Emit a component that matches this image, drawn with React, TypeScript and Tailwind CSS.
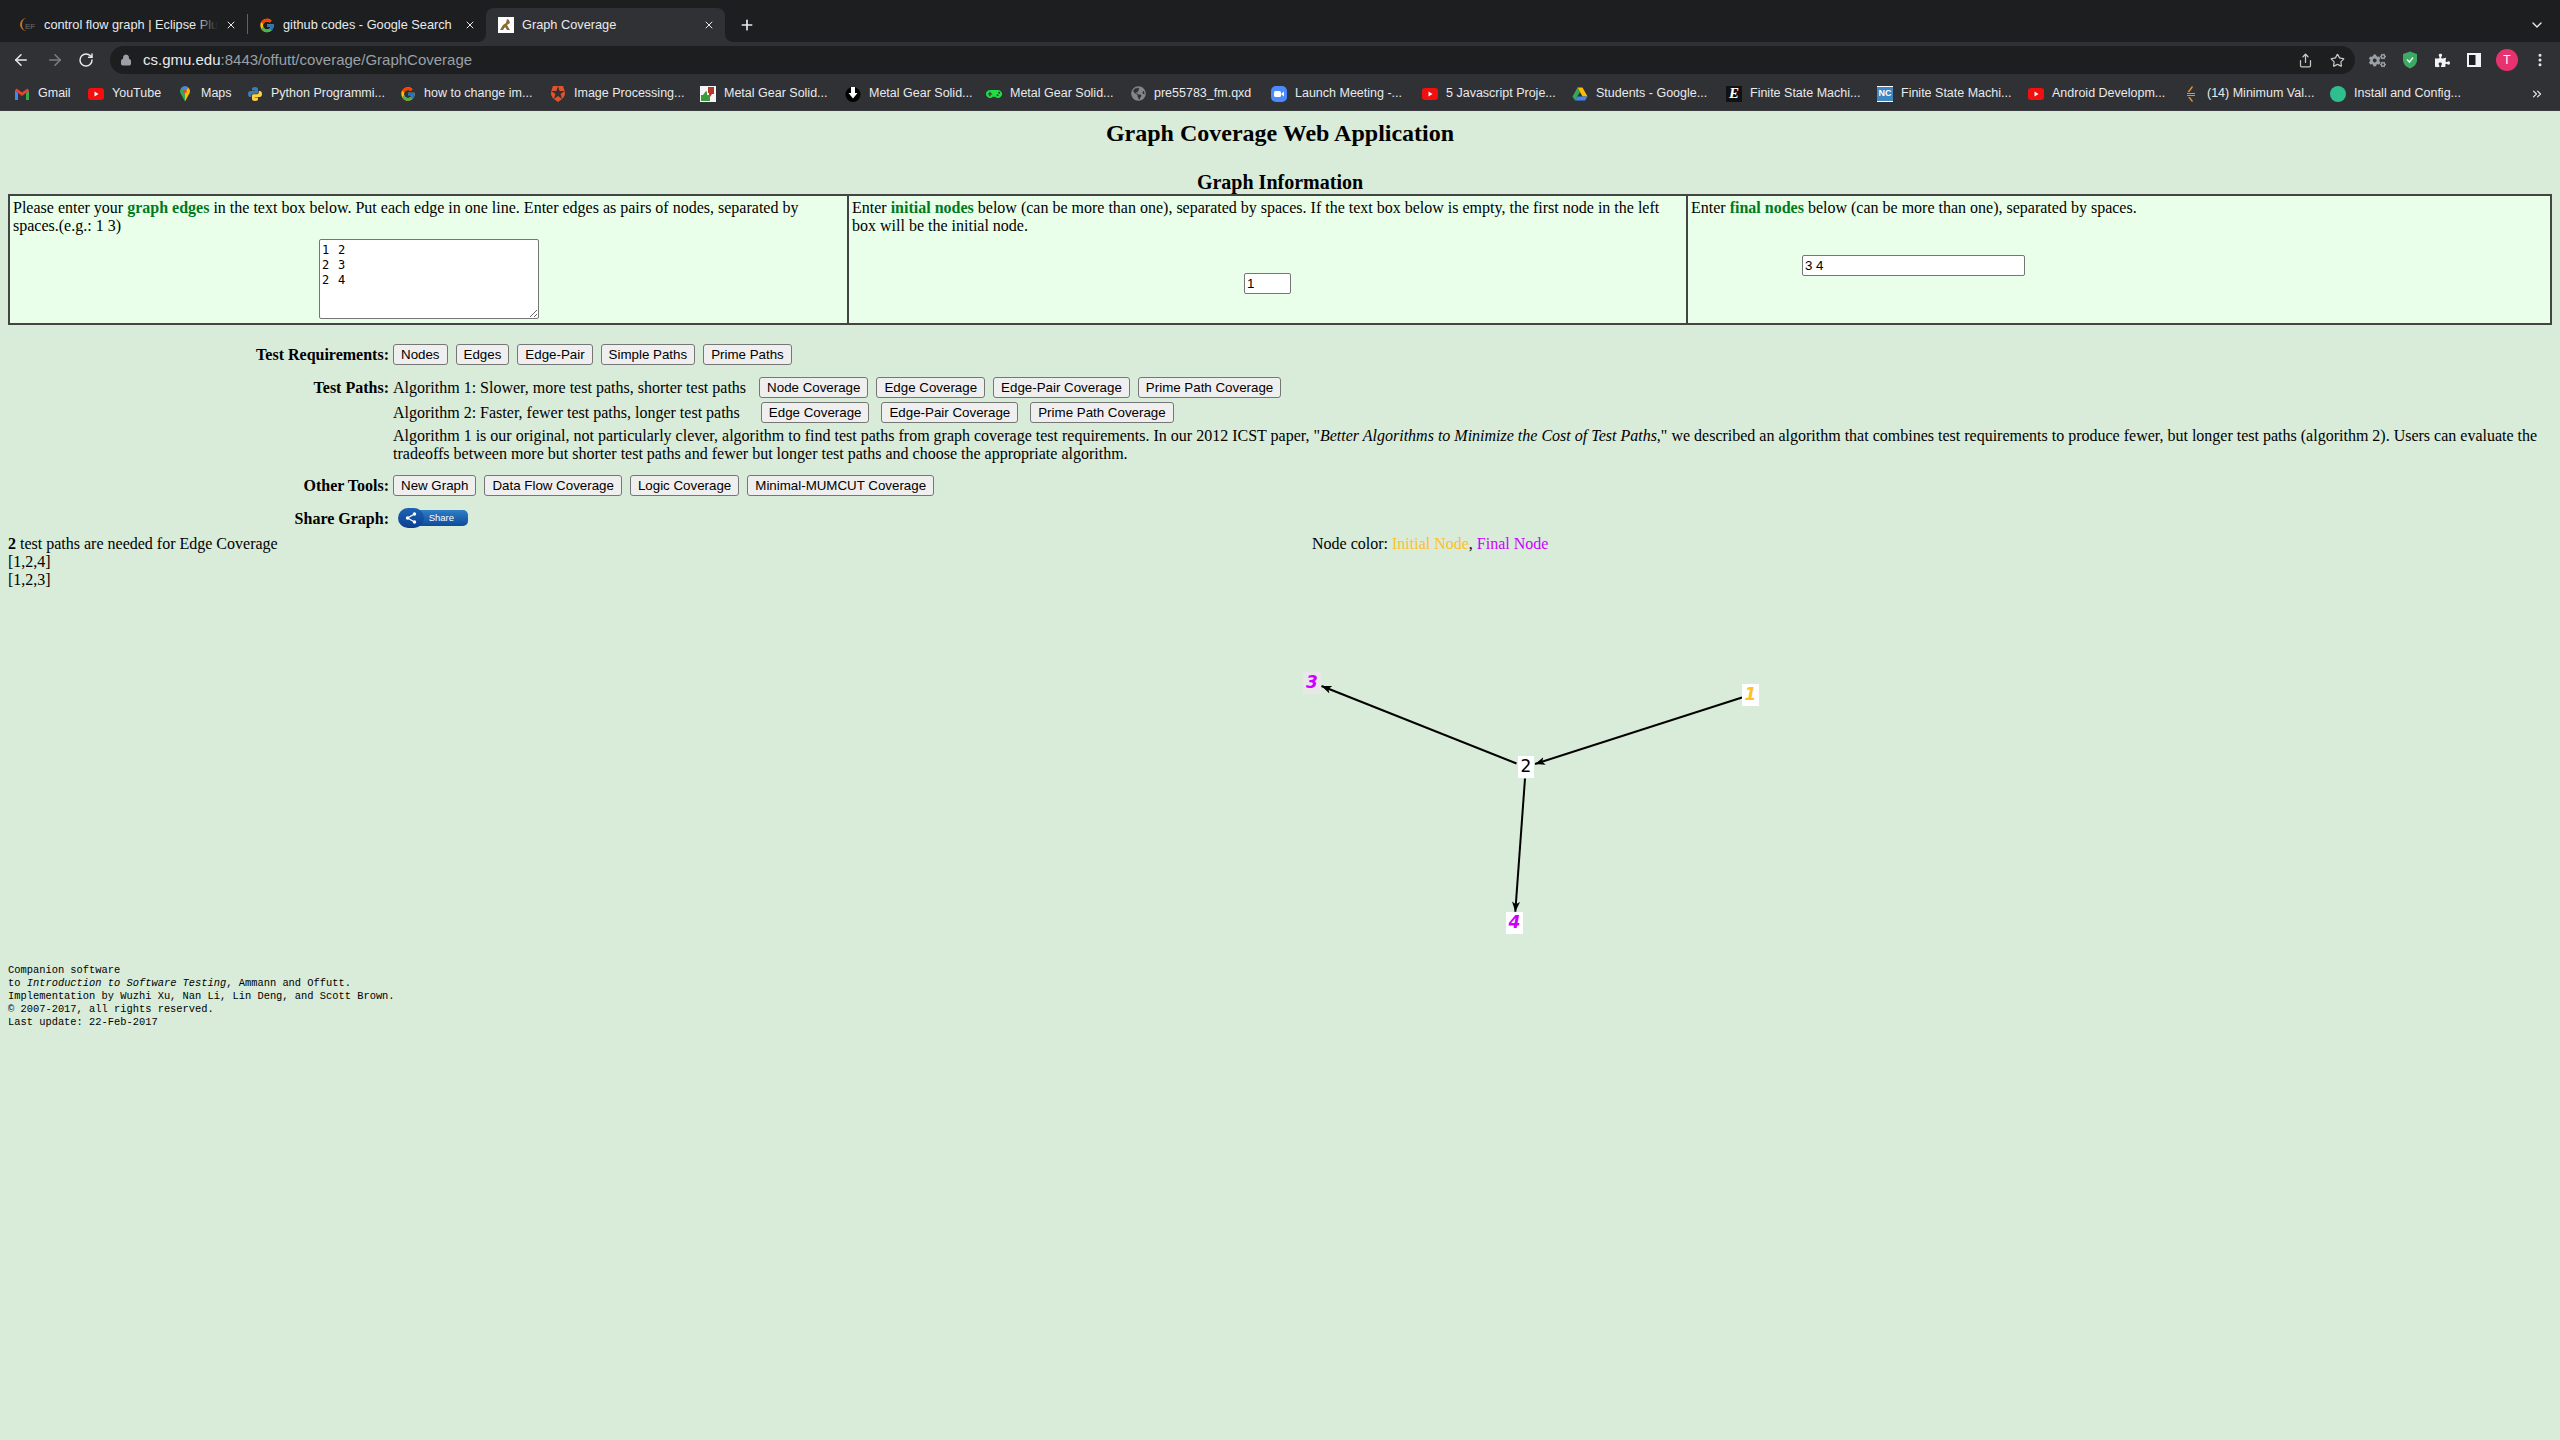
import React from "react";
import { ArrowLeft, ArrowRight, ChevronDown, ChevronsRight, EllipsisVertical, Lock, Plus, RotateCw, Share, Star, X } from "lucide-react";
import { FcGoogle } from "react-icons/fc";
import { FaCogs, FaGamepad, FaGlobeAmericas, FaPuzzlePiece } from "react-icons/fa";
import { SiAuth0 } from "react-icons/si";

const YouTubeIcon = () => (
  <svg width="16" height="16" viewBox="0 0 16 16">
    <rect x="0" y="2" width="16" height="12" rx="3" fill="#f40f0f" />
    <path d="M6.500 5.500l4 2.500-4 2.500z" fill="#fff" />
  </svg>
);

const GmailIcon = () => (
  <svg width="16" height="16" viewBox="0 0 16 16">
    <path d="M1 4v10h3V7z" fill="#4285f4" />
    <path d="M15 4v10h-3V7z" fill="#34a853" />
    <path d="M1 4.500L2.500 2.500 8 6.500l5.500-4L15 4.500 8 10z" fill="#ea4335" />
  </svg>
);

const MapsIcon = () => (
  <svg width="16" height="16" viewBox="0 0 16 16">
    <path d="M8 0.500C5 0.500 3 2.700 3 5.300c0 1.200.5 2.200 1.200 3.200L8 15.500z" fill="#34a853" />
    <path d="M8 0.500c3 0 5 2.200 5 4.800 0 1.200-.5 2.200-1.200 3.200L8 15.500z" fill="#fbbc04" />
    <path d="M4.500 1.800A5 5 0 0 1 11.500 1.800L8 5.300z" fill="#4285f4" />
    <circle cx="8" cy="5.300" r="1.800" fill="#ea4335" />
  </svg>
);

const PythonIcon = () => {
  const d = "M8 1C5.500 1 5 2 5 3v1.500h3.200V5H3.200C2 5 1 6 1 8s1 3 2 3h1.300V9.500C4.300 8.500 5 7.800 6 7.800h3.500c.9 0 1.500-.7 1.500-1.500V3c0-1-1-2-3-2z";
  return (
    <svg width="16" height="16" viewBox="0 0 16 16">
      <path d={d} fill="#3f7cb0" />
      <path d={d} fill="#fdd23e" transform="rotate(180 8 8)" />
    </svg>
  );
};

const ThumbsIcon = () => (
  <svg width="16" height="16" viewBox="0 0 16 16">
    <rect width="16" height="16" fill="#f4f4f4" />
    <path d="M8 1h6v7h-2l-2 3-1-1V7H8z" fill="#b8342f" />
    <path d="M1 9h2l3-4 1 1v3h3v6H1z" fill="#3c9a3c" />
  </svg>
);

const DownloadIcon = () => (
  <svg width="16" height="16" viewBox="0 0 16 16">
    <circle cx="8" cy="8.500" r="7.500" fill="#000" />
    <path d="M6 1h4v6h2.500L8 12.500 3.500 7H6z" fill="#fff" />
  </svg>
);

const ZoomIcon = () => (
  <svg width="16" height="16" viewBox="0 0 16 16">
    <rect width="16" height="16" rx="5" fill="#4a8cff" />
    <rect x="3" y="5" width="7" height="6" rx="1.500" fill="#fff" />
    <path d="M10.500 7.500L13 5.500v5l-2.500-2z" fill="#fff" />
  </svg>
);

const DriveIcon = () => (
  <svg width="16" height="16" viewBox="0 0 16 16">
    <path d="M5.500 1.500h5l5 9h-5z" fill="#fbbc04" />
    <path d="M5.500 1.500L0.500 10.500 3 14.500 8 6z" fill="#34a853" />
    <path d="M5.500 10.500h10L13 14.500H3z" fill="#4285f4" />
  </svg>
);

const EIcon = () => (
  <span className="flex h-[16px] w-[16px] items-center justify-center bg-[#111] font-['Liberation_Serif',serif] text-[15px] font-bold italic leading-none text-white">
    E
  </span>
);

const UncIcon = () => (
  <span className="flex h-[16px] w-[16px] items-center justify-center bg-white">
    <span className="flex h-[14px] w-[16px] items-center justify-center bg-[#3e87c4] font-['Liberation_Sans',sans-serif] text-[9px] font-bold leading-none text-white">
      NC
    </span>
  </span>
);

const ValIcon = () => (
  <svg width="16" height="16" viewBox="0 0 16 16">
    <path d="M9 0L4.500 6h2L10 1z" fill="#e8912b" />
    <path d="M4 7h8v1H4zM4 9h8v1H4z" fill="#a0a0a0" />
    <path d="M5 11l4 5 1-1-3-4z" fill="#e8912b" />
  </svg>
);

const bookmarks: { icon: React.ReactNode; label: string; w: string }[] = [
  { icon: <GmailIcon />, label: "Gmail", w: "w-[74px]" },
  { icon: <YouTubeIcon />, label: "YouTube", w: "w-[89px]" },
  { icon: <MapsIcon />, label: "Maps", w: "w-[70px]" },
  { icon: <PythonIcon />, label: "Python Programmi...", w: "w-[153px]" },
  { icon: <FcGoogle size={16} />, label: "how to change im...", w: "w-[150px]" },
  { icon: <SiAuth0 size={16} color="#e0532c" />, label: "Image Processing...", w: "w-[150px]" },
  { icon: <ThumbsIcon />, label: "Metal Gear Solid...", w: "w-[145px]" },
  { icon: <DownloadIcon />, label: "Metal Gear Solid...", w: "w-[141px]" },
  { icon: <FaGamepad size={16} color="#22dd44" />, label: "Metal Gear Solid...", w: "w-[144px]" },
  { icon: <FaGlobeAmericas size={15} color="#80868b" />, label: "pre55783_fm.qxd", w: "w-[141px]" },
  { icon: <ZoomIcon />, label: "Launch Meeting -...", w: "w-[151px]" },
  { icon: <YouTubeIcon />, label: "5 Javascript Proje...", w: "w-[150px]" },
  { icon: <DriveIcon />, label: "Students - Google...", w: "w-[154px]" },
  { icon: <EIcon />, label: "Finite State Machi...", w: "w-[151px]" },
  { icon: <UncIcon />, label: "Finite State Machi...", w: "w-[151px]" },
  { icon: <YouTubeIcon />, label: "Android Developm...", w: "w-[155px]" },
  { icon: <ValIcon />, label: "(14) Minimum Val...", w: "w-[147px]" },
  { icon: <span className="block h-[16px] w-[16px] rounded-full bg-[#2fbf8f]" />, label: "Install and Config...", w: "w-[140px]" },
];

const Tab = ({ icon, title, active, fade }: { icon: React.ReactNode; title: string; active?: boolean; fade?: boolean }) => (
  <div className={`relative flex h-[34px] w-[239px] shrink-0 items-center pl-[12px] pr-[10px] ${active ? "rounded-t-[8px] bg-[#303134]" : ""}`}>
    {active && <span className="absolute bottom-0 left-[-8px] h-[8px] w-[8px] bg-[radial-gradient(circle_at_0_0,#1d1e20_7.5px,#303134_8.5px)]" />}
    {active && <span className="absolute bottom-0 right-[-8px] h-[8px] w-[8px] bg-[radial-gradient(circle_at_100%_0,#1d1e20_7.5px,#303134_8.5px)]" />}
    <span className="flex h-[16px] w-[16px] shrink-0 items-center justify-center">{icon}</span>
    <div className="relative ml-[8px] w-[174px] overflow-hidden whitespace-nowrap text-[12.75px] text-[#e8eaed]">
      {title}
      {fade && <span className="absolute right-0 top-0 h-full w-[24px] bg-linear-to-r from-transparent to-[#1d1e20]" />}
    </div>
    <X size={12} strokeWidth={2} className="ml-auto text-[#e8eaed]" />
  </div>
);

const Btn = ({ children, className = "" }: { children: React.ReactNode; className?: string }) => (
  <button
    type="button"
    className={`h-[21px] rounded-[3px] border border-[#767676] bg-[#efefef] px-[7px] font-['Liberation_Sans',sans-serif] text-[13.33px] leading-none text-black ${className}`}
  >
    {children}
  </button>
);

const Label = ({ children, className = "" }: { children: React.ReactNode; className?: string }) => (
  <div className={`text-right font-bold ${className}`}>{children}</div>
);

const nodeBase = "absolute flex h-[22px] items-center justify-center pb-[2px] font-['DejaVu_Sans',sans-serif] text-[17px] leading-none";

export default function App() {
  return (
    <div className="flex min-h-screen flex-col bg-[#d9ebd9]">
      {/* browser chrome */}
      <div className="flex h-[42px] items-end bg-[#1d1e20] pl-[8px] font-['Liberation_Sans',sans-serif]">
        <Tab
          fade
          title="control flow graph | Eclipse Plugins"
          icon={
            <span className="relative block h-[16px] w-[16px]">
              <span className="absolute left-0 top-[1px] h-[13px] w-[10px] rounded-l-full border-l-2 border-[#c9722b]" />
              <span className="absolute left-[5px] top-[6px] font-['Liberation_Sans',sans-serif] text-[8px] font-bold leading-none text-[#555]">EF</span>
            </span>
          }
        />
        <div className="relative">
          <span className="absolute left-0 top-[6px] h-[20px] w-px bg-[#5f6368]" />
          <Tab title="github codes - Google Search" icon={<FcGoogle size={17} />} />
        </div>
        <Tab
          active
          title="Graph Coverage"
          icon={
            <svg width="16" height="16" viewBox="0 0 16 16">
              <rect width="16" height="16" fill="#fff" />
              <path d="M2 13l3-5 3-2 1-4 2 1 1 3-3 2 3 5h-3l-2-3-2 3z" fill="#8a6a34" />
            </svg>
          }
        />
        <Plus size={16} strokeWidth={2.5} className="mb-[9px] ml-[14px] text-[#e8eaed]" />
        <ChevronDown size={16} className="mb-[9px] ml-auto mr-[15px] text-[#e8eaed]" />
      </div>
      <div className="flex h-[32px] items-end bg-[#303134] font-['Liberation_Sans',sans-serif]">
        <div className="flex h-[28px] w-[110px] items-center text-[#e8eaed]">
          <ArrowLeft size={18} strokeWidth={2} className="ml-[12px]" />
          <ArrowRight size={18} strokeWidth={2} className="ml-[16px] text-[#7c7f84]" />
          <RotateCw size={16} strokeWidth={2.2} className="ml-[14px]" />
        </div>
        <div className="flex h-[28px] w-[2245px] items-center rounded-full bg-[#1d1e20] pl-[10px] pr-[9px]">
          <Lock size={12} fill="#9aa0a6" className="text-[#9aa0a6]" />
          <span className="ml-[11px] text-[15px] text-[#e8eaed]">
            cs.gmu.edu<span className="text-[#9aa0a6]">:8443/offutt/coverage/GraphCoverage</span>
          </span>
          <Share size={15} className="ml-auto text-[#c4c7c5]" />
          <Star size={15} className="ml-[17px] mr-[1px] text-[#c4c7c5]" />
        </div>
        <div className="flex h-[28px] flex-1 items-center pl-[14px] text-[#e8eaed]">
          <FaCogs size={17} color="#9aa0a6" />
          <svg width="16" height="18" viewBox="0 0 16 18" className="ml-[16px]">
            <path d="M8 0.500L15 3v6c0 4-3 7-7 8.500C4 16 1 13 1 9V3z" fill="#3ea865" />
            <path d="M5 8.500l2.500 2.500L11 6.500" stroke="#dff5e6" strokeWidth="1.500" fill="none" />
          </svg>
          <FaPuzzlePiece size={15} color="#f1f3f4" className="ml-[17px]" />
          <svg width="14" height="14" viewBox="0 0 14 14" className="ml-[17px]">
            <rect x="0" y="0" width="14" height="14" fill="#f1f3f4" />
            <rect x="2" y="2" width="6.500" height="10" fill="#1d1e20" />
          </svg>
          <span className="ml-[15px] flex h-[22px] w-[22px] items-center justify-center rounded-full bg-[#e8326e] text-[12px] text-white">T</span>
          <EllipsisVertical size={16} strokeWidth={2.5} className="ml-[14px]" />
        </div>
      </div>
      <div className="flex h-[37px] items-center border-b border-[#3c3d40] bg-[#303134] pl-[14px] pt-[3px] font-['Liberation_Sans',sans-serif] text-[12.5px] text-[#e8eaed]">
        {bookmarks.map((b, i) => (
          <div key={i} className={`flex shrink-0 items-center gap-[8px] whitespace-nowrap ${b.w}`}>
            <span className="flex h-[16px] w-[16px] shrink-0 items-center justify-center">{b.icon}</span>
            {b.label}
          </div>
        ))}
        <ChevronsRight size={14} className="ml-auto mr-[16px]" />
      </div>

      {/* page */}
      <div className="flex-1 font-['Liberation_Serif',serif] text-[16px] leading-[18px] text-black">
        <h1 className="pt-[8px] text-center text-[24px] font-bold leading-[28px]">Graph Coverage Web Application</h1>
        <h3 className="mt-[24px] pb-[1px] text-center text-[20px] font-bold leading-[22px]">Graph Information</h3>

        <div className="mx-[8px] grid h-[131px] grid-cols-[839px_839px_1fr] border-2 border-[#444] bg-[#e9ffe9]">
          <div className="border-r-2 border-[#444] pl-[3px] pt-[3px]">
            <p>
              Please enter your <b className="text-[#007a1f]">graph edges</b> in the text box below. Put each edge in one line. Enter edges as pairs of nodes, separated by spaces.(e.g.: 1 3)
            </p>
            <textarea
              readOnly
              defaultValue={"1 2\n2 3\n2 4"}
              className="ml-[306px] mt-[4px] block h-[80px] w-[220px] rounded-[2px] border border-[#767676] bg-white px-[2px] pt-[3px] font-['DejaVu_Sans_Mono',monospace] text-[12px] leading-[15px] tracking-[0.78px]"
            />
          </div>
          <div className="border-r-2 border-[#444] pl-[3px] pt-[3px]">
            <p>
              Enter <b className="text-[#007a1f]">initial nodes</b> below (can be more than one), separated by spaces. If the text box below is empty, the first node in the left box will be the initial node.
            </p>
            <input
              readOnly
              defaultValue="1"
              className="ml-[392px] mt-[38px] block h-[21px] w-[47px] rounded-[2px] border border-[#767676] bg-white px-[2px] font-['Liberation_Sans',sans-serif] text-[13.33px]"
            />
          </div>
          <div className="pl-[3px] pt-[3px]">
            <p>
              Enter <b className="text-[#007a1f]">final nodes</b> below (can be more than one), separated by spaces.
            </p>
            <input
              readOnly
              defaultValue="3 4"
              className="ml-[111px] mt-[38px] block h-[21px] w-[223px] rounded-[2px] border border-[#767676] bg-white px-[2px] font-['Liberation_Sans',sans-serif] text-[13.33px]"
            />
          </div>
        </div>

        <div className="mt-[19px] grid grid-cols-[389px_1fr] gap-x-[4px] gap-y-[12px] pr-[8px]">
          <Label className="leading-[21px]">Test Requirements:</Label>
          <div className="flex gap-[8px]">
            <Btn>Nodes</Btn>
            <Btn>Edges</Btn>
            <Btn>Edge-Pair</Btn>
            <Btn>Simple Paths</Btn>
            <Btn>Prime Paths</Btn>
          </div>

          <Label className="leading-[21px]">Test Paths:</Label>
          <div>
            <div className="flex h-[21px] items-center">
              <span>Algorithm 1: Slower, more test paths, shorter test paths</span>
              <div className="ml-[13px] flex gap-[8px]">
                <Btn>Node Coverage</Btn>
                <Btn>Edge Coverage</Btn>
                <Btn>Edge-Pair Coverage</Btn>
                <Btn>Prime Path Coverage</Btn>
              </div>
            </div>
            <div className="mt-[4px] flex h-[21px] items-center">
              <span>Algorithm 2: Faster, fewer test paths, longer test paths</span>
              <div className="ml-[21px] flex gap-[12px]">
                <Btn>Edge Coverage</Btn>
                <Btn>Edge-Pair Coverage</Btn>
                <Btn>Prime Path Coverage</Btn>
              </div>
            </div>
            <p className="mt-[4px]">
              Algorithm 1 is our original, not particularly clever, algorithm to find test paths from graph coverage test requirements. In our 2012 ICST paper, "<i>Better Algorithms to Minimize the Cost of Test Paths</i>," we described an algorithm that combines test requirements to produce fewer, but longer test paths (algorithm 2). Users can evaluate the tradeoffs between more but shorter test paths and fewer but longer test paths and choose the appropriate algorithm.
            </p>
          </div>

          <Label className="leading-[21px]">Other Tools:</Label>
          <div className="flex gap-[8px]">
            <Btn>New Graph</Btn>
            <Btn>Data Flow Coverage</Btn>
            <Btn>Logic Coverage</Btn>
            <Btn>Minimal-MUMCUT Coverage</Btn>
          </div>

          <Label className="leading-[22px]">Share Graph:</Label>
          <div className="relative ml-[5px] h-[20px] w-[70px]">
            <div className="absolute right-0 top-[2px] flex h-[16px] w-[62px] items-center justify-end rounded-r-[5px] bg-linear-to-b from-[#2f7fc4] to-[#0f4a9c] pr-[14px] font-['Liberation_Sans',sans-serif] text-[9.500px] leading-none text-white">
              Share
            </div>
            <div className="absolute left-0 top-0 flex h-[20px] w-[26px] items-center justify-center rounded-full bg-linear-to-b from-[#1d63b5] to-[#0c3f8f]">
              <svg width="12" height="12" viewBox="0 0 12 12">
                <path d="M9.500 2L2.500 6l7 4" stroke="#fff" strokeWidth="1.300" fill="none" />
                <circle cx="9.500" cy="2" r="1.700" fill="#fff" />
                <circle cx="2.500" cy="6" r="1.700" fill="#fff" />
                <circle cx="9.500" cy="10" r="1.700" fill="#fff" />
              </svg>
            </div>
          </div>
        </div>

        <div className="mt-[5px] flex">
          <div className="w-[1312px] pl-[8px]">
            <div>
              <b>2</b> test paths are needed for Edge Coverage
            </div>
            <div>[1,2,4]</div>
            <div>[1,2,3]</div>
          </div>
          <div>
            Node color: <span className="text-[#ffc125]">Initial Node</span>, <span className="text-[#cc00ff]">Final Node</span>
          </div>
        </div>

        {/* graph canvas: page y 589 */}
        <div className="relative h-[375px]">
          <svg className="absolute left-0 top-0" width="2560" height="375" viewBox="0 0 2560 375">
            <defs>
              <marker id="arr" markerUnits="userSpaceOnUse" markerWidth="11" markerHeight="8" refX="10" refY="4" orient="auto">
                <path d="M0 0L10 4 0 8 2.500 4z" fill="#000" />
              </marker>
            </defs>
            <g stroke="#000" strokeWidth="2">
              <line x1="1742" y1="108.500" x2="1535" y2="175" markerEnd="url(#arr)" />
              <line x1="1516.500" y1="174.500" x2="1321.500" y2="97" markerEnd="url(#arr)" />
              <line x1="1525" y1="189.500" x2="1515.300" y2="322.700" markerEnd="url(#arr)" />
            </g>
          </svg>
          <div className={`${nodeBase} left-[1303px] top-[83px] w-[18px] bg-[#e8e8e8] font-bold italic text-[#cc00ff]`}>3</div>
          <div className={`${nodeBase} left-[1742px] top-[95px] w-[17px] bg-white font-bold italic text-[#ffc125]`}>1</div>
          <div className={`${nodeBase} left-[1518px] top-[167px] w-[16px] bg-white text-black`}>2</div>
          <div className={`${nodeBase} left-[1506px] top-[323px] w-[17px] bg-white font-bold italic text-[#cc00ff]`}>4</div>
        </div>

        <div className="pl-[8px] font-['Liberation_Mono',monospace] text-[10.400px] leading-[13px]">
          <div>Companion software</div>
          <div>
            to <i>Introduction to Software Testing</i>, Ammann and Offutt.
          </div>
          <div>Implementation by Wuzhi Xu, Nan Li, Lin Deng, and Scott Brown.</div>
          <div>© 2007-2017, all rights reserved.</div>
          <div>Last update: 22-Feb-2017</div>
        </div>
      </div>
    </div>
  );
}
